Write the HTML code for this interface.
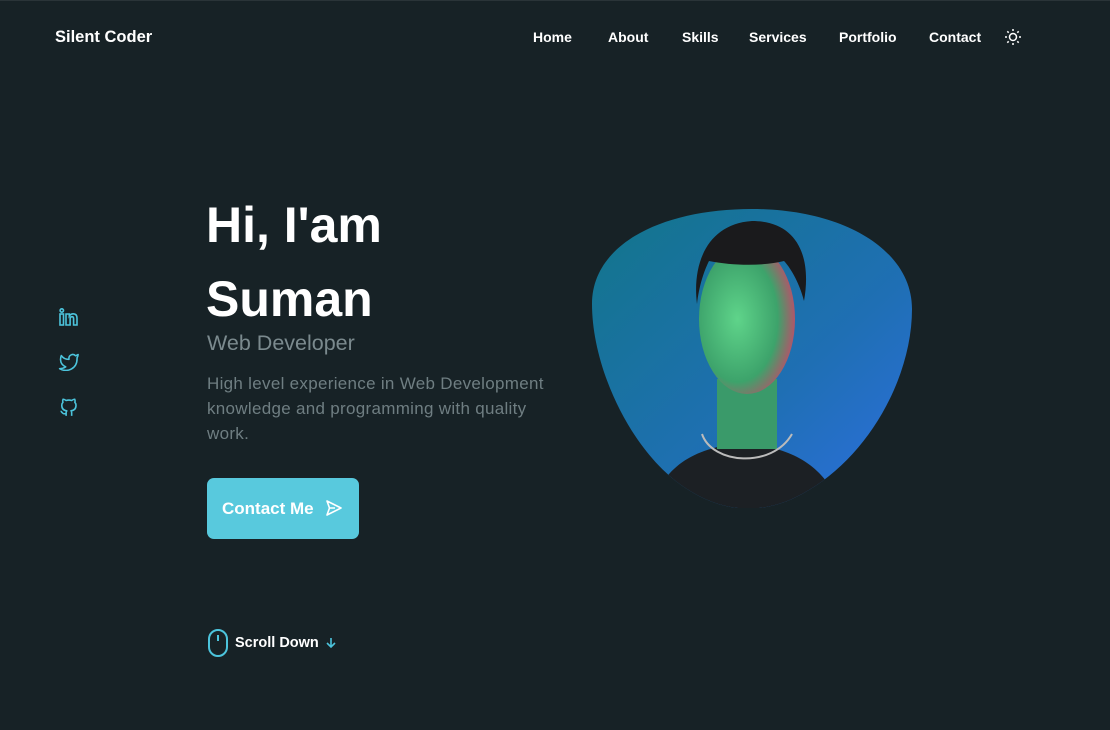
<!DOCTYPE html>
<html><head><meta charset="utf-8"><style>
*{margin:0;padding:0;box-sizing:border-box}
body{width:1110px;height:730px;background:#172226;font-family:"Liberation Sans",sans-serif;color:#fff;position:relative;overflow:hidden}
.abs{position:absolute}
.nav a{position:absolute;top:29px;font-size:14px;font-weight:bold;color:#fff;text-decoration:none}
</style></head><body>
<div class="abs" style="left:0;top:0;width:1110px;height:1px;background:#2a3438"></div>
<div class="abs" style="left:55px;top:28px;font-size:16.5px;font-weight:bold">Silent Coder</div>
<div class="nav">
<a style="left:533px">Home</a><a style="left:608px">About</a><a style="left:682px">Skills</a><a style="left:749px">Services</a><a style="left:839px">Portfolio</a><a style="left:929px">Contact</a>
</div>
<svg class="abs" style="left:1004px;top:28px" width="18" height="18" viewBox="0 0 18 18" fill="none" stroke="#fff" stroke-width="1.5"><circle cx="9" cy="9" r="3.5"/><path d="M9 1v2M9 15v2M1 9h2M15 9h2M3.3 3.3l1.4 1.4M13.3 13.3l1.4 1.4M3.3 14.7l1.4-1.4M13.3 4.7l1.4-1.4"/></svg>

<svg class="abs" style="left:59px;top:308px" width="20" height="18" viewBox="0 0 20 18" fill="none" stroke="#4cc4dc" stroke-width="1.6"><rect x="1" y="6" width="3.5" height="11"/><circle cx="2.8" cy="2.5" r="1.7"/><path d="M7 17V6h3.3v2c1-1.6 2.4-2.2 4-2.2 2.5 0 3.7 1.6 3.7 4.4V17h-3.4v-6.3c0-1.4-.6-2-1.6-2s-1.9.7-1.9 2.1V17z"/></svg>
<svg class="abs" style="left:58px;top:353px" width="21" height="18" viewBox="0 0 24 20" fill="none" stroke="#4cc4dc" stroke-width="1.8" stroke-linejoin="round"><path d="M23 1.5a10 10 0 0 1-3 1.4A4.3 4.3 0 0 0 12.5 6v1A10.3 10.3 0 0 1 3.8 2.6s-4 9 5 13a11.6 11.6 0 0 1-7 2c9 5 20 0 20-11.5 0-.3 0-.6-.1-.8A7.7 7.7 0 0 0 23 1.5z"/></svg>
<svg class="abs" style="left:59px;top:398px" width="19" height="20" viewBox="0 0 24 24" fill="none" stroke="#4cc4dc" stroke-width="2" stroke-linejoin="round"><path d="M9 19c-5 1.5-5-2.5-7-3m14 6v-3.9a3.4 3.4 0 0 0-.9-2.6c3.1-.3 6.4-1.5 6.4-7A5.4 5.4 0 0 0 20 4.8 5 5 0 0 0 19.9 1S18.7.7 16 2.5a13.4 13.4 0 0 0-7 0C6.3.7 5.1 1 5.1 1A5 5 0 0 0 5 4.8a5.4 5.4 0 0 0-1.5 3.8c0 5.4 3.3 6.6 6.4 7a3.4 3.4 0 0 0-.9 2.6V22"/></svg>

<div class="abs" style="left:206px;top:188px;font-size:50px;font-weight:bold;line-height:74px">Hi, I'am<br>Suman</div>
<div class="abs" style="left:207px;top:331px;font-size:21.5px;color:#7b8a8e">Web Developer</div>
<div class="abs" style="left:207px;top:371px;width:350px;font-size:17px;letter-spacing:.3px;line-height:25px;color:#6f7e82">High level experience in Web Development knowledge and programming with quality work.</div>
<div class="abs" style="left:207px;top:478px;width:152px;height:61px;background:#58c9dd;border-radius:7px"></div>
<div class="abs" style="left:222px;top:499px;font-size:17px;font-weight:bold">Contact Me</div>
<svg class="abs" style="left:325px;top:499px" width="18" height="18" viewBox="0 0 18 18" fill="none" stroke="#fff" stroke-width="1.6" stroke-linejoin="round"><path d="M2 2l14 7-14 7 2.5-7zM4.5 9H10"/></svg>

<div class="abs" style="left:208px;top:629px;width:20px;height:28px;border:2px solid #4cc4dc;border-radius:10px"></div>
<div class="abs" style="left:217px;top:635px;width:2px;height:6px;background:#4cc4dc"></div>
<div class="abs" style="left:235px;top:635px;font-size:14.5px;font-weight:bold">Scroll Down</div>
<svg class="abs" style="left:325px;top:637px" width="12" height="12" viewBox="0 0 12 12" fill="none" stroke="#4cc4dc" stroke-width="1.6"><path d="M6 1v9M2 6l4 4 4-4"/></svg>

<svg class="abs" style="left:592px;top:209px" width="321" height="299" viewBox="0 0 321 299">
<defs>
<clipPath id="b"><path d="M160 0C250 0 320 40 320 100c0 70-45 150-110 185-40 22-80 18-115-5C40 245 0 160 0 95 0 35 70 0 160 0z"/></clipPath>
<linearGradient id="g" x1="0" y1="0" x2="1" y2="1"><stop offset="0" stop-color="#12758a"/><stop offset=".6" stop-color="#1f6fb4"/><stop offset="1" stop-color="#2d6fe0"/></linearGradient>
<radialGradient id="f" cx=".4" cy=".5" r=".6"><stop offset="0" stop-color="#5fd48a"/><stop offset=".7" stop-color="#3da36b"/><stop offset="1" stop-color="#b0566a"/></radialGradient>
</defs>
<g clip-path="url(#b)">
<rect width="321" height="299" fill="url(#g)"/>
<path d="M60 299c10-40 40-60 90-65 50 5 80 20 100 65z" fill="#1c2024"/>
<rect x="125" y="170" width="60" height="70" fill="#3a9a6a"/>
<ellipse cx="155" cy="110" rx="48" ry="75" fill="url(#f)"/>
<path d="M105 95c-5-40 10-80 55-83 45 0 60 35 52 80-5-20-15-35-20-40-20 5-50 5-75 0-5 10-10 25-12 43z" fill="#1a1a1c"/>
<path d="M110 225c10 30 70 35 90 0" fill="none" stroke="#bbb" stroke-width="2"/>
</g>
</svg>
</body></html>
